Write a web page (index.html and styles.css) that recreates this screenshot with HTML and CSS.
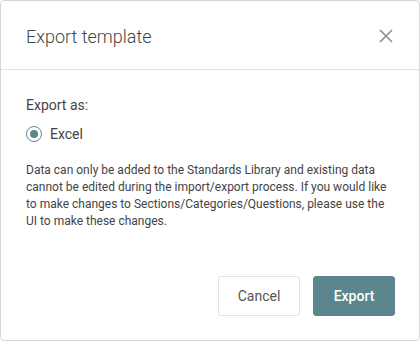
FILE: index.html
```html
<!DOCTYPE html>
<html>
<head>
<meta charset="utf-8">
<link rel="stylesheet" href="styles.css">
</head>
<body>
<div class="dialog">
  <div class="header">
    <h1 class="title">Export template</h1>
    <button class="close" aria-label="Close">
      <svg width="14" height="14" viewBox="0 0 14 14"><path d="M1 1L13 13M13 1L1 13" stroke="#8f8f8f" stroke-width="1.7" fill="none"/></svg>
    </button>
  </div>
  <div class="body">
    <div class="label">Export as:</div>
    <label class="radio-row">
      <span class="radio"><span class="dot"></span></span>
      <span class="radio-text">Excel</span>
    </label>
    <p class="note">Data can only be added to the Standards Library and existing data cannot be edited during the import/export process. If you would like to make changes to Sections/Categories/Questions, please use the UI to make these changes.</p>
  </div>
  <div class="footer">
    <button class="btn btn-cancel">Cancel</button>
    <button class="btn btn-export">Export</button>
  </div>
</div>
</body>
</html>
```
FILE: styles.css
```css
html, body {
  margin: 0;
  padding: 0;
  background: #fff;
}
body {
  font-family: Roboto, "Noto Sans", sans-serif;
  color: #444;
}
.dialog {
  box-sizing: border-box;
  width: 420px;
  height: 341px;
  border: 1px solid #d6d6d6;
  border-radius: 4px;
  background: #fff;
  display: flex;
  flex-direction: column;
}
.header {
  height: 69px;
  display: flex;
  align-items: center;
  justify-content: space-between;
  padding: 2px 24px 0 25px;
  box-sizing: border-box;
  border-bottom: 1px solid #e2e2e2;
}
.title {
  margin: 0;
  font-size: 18px;
  font-weight: 300;
  color: #444;
}
.close {
  border: 0;
  background: none;
  padding: 0;
  width: 14px;
  height: 14px;
  margin-right: 2px;
  display: flex;
}
.body {
  padding: 25px 25px 0;
  flex: 1;
}
.label {
  font-size: 14px;
  line-height: 20px;
  color: #444;
}
.radio-row {
  display: flex;
  align-items: center;
  margin-top: 11px;
  gap: 8px;
}
.radio {
  box-sizing: border-box;
  width: 16px;
  height: 16px;
  border: 1px solid #5b868d;
  border-radius: 50%;
  display: flex;
  align-items: center;
  justify-content: center;
}
.dot {
  width: 8px;
  height: 8px;
  border-radius: 50%;
  background: #5b868d;
}
.radio-text {
  font-size: 14px;
  color: #444;
}
.note {
  margin: 20px 0 0;
  font-size: 12px;
  line-height: 17px;
  color: #444;
}
.footer {
  display: flex;
  justify-content: flex-end;
  gap: 13px;
  padding: 0 24px 24px;
}
.btn {
  box-sizing: border-box;
  width: 82px;
  height: 40px;
  border-radius: 3px;
  font-family: Roboto, "Noto Sans", sans-serif;
  font-size: 14px;
}
.btn-cancel {
  background: #fff;
  border: 1px solid #e4e4e4;
  color: #555;
}
.btn-export {
  background: #5b868d;
  border: 1px solid #5b868d;
  color: #fff;
  font-weight: 500;
}
```
